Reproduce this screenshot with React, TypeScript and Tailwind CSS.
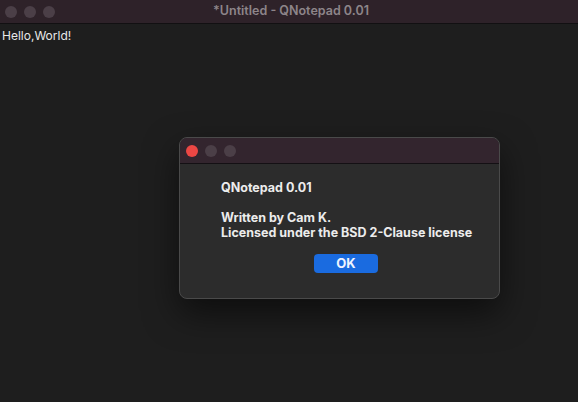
import React from 'react';

const Dot = ({ color }: { color: string }) => (
  <span className={`block w-[12px] h-[12px] rounded-full ${color}`} />
);

export default function App() {
  return (
    <div
      className="relative w-[578px] h-[402px] overflow-hidden bg-[#1e1e1e] text-white"
      style={{ fontFamily: 'Inter, "Liberation Sans", sans-serif' }}
    >
      {/* main window title bar */}
      <div className="relative flex items-center h-[24px] bg-[#2e2229] border-b border-[#121012]">
        <div className="flex gap-[7px] pl-[5px]">
          <Dot color="bg-[#4b3f47]" />
          <Dot color="bg-[#4b3f47]" />
          <Dot color="bg-[#4b3f47]" />
        </div>
        <div className="absolute inset-0 flex items-center justify-center pl-[4px] text-[12.5px] font-semibold text-[#8d8589]">
          *Untitled - QNotepad 0.01
        </div>
      </div>

      {/* editor */}
      <div className="px-[2px] pt-[4px] text-[12px] leading-[15px] text-[#e8e8e8]">Hello,World!</div>

      {/* about dialog */}
      <div className="absolute left-[179px] top-[137px] w-[321px] h-[162px] rounded-[8px] overflow-hidden border border-[#4a4a4a] bg-[#2c2c2c] shadow-[0_14px_34px_rgba(0,0,0,0.55)]">
        <div className="flex items-center h-[26px] bg-[#33252e] border-b border-[#141014]">
          <div className="flex gap-[7px] pl-[6px]">
            <Dot color="bg-[#ec4744]" />
            <Dot color="bg-[#4b3f47]" />
            <Dot color="bg-[#4b3f47]" />
          </div>
        </div>
        <div className="pl-[41px] pt-[16px] text-[12.5px] font-bold leading-[15px] text-[#ececec]">
          <div>QNotepad 0.01</div>
          <div className="mt-[15px]">Written by Cam K.</div>
          <div>Licensed under the BSD 2-Clause license</div>
        </div>
        <div className="flex justify-center mt-[14px]">
          <button className="w-[64px] h-[19px] ml-[13px] rounded-[4px] bg-[#1a6be0] text-[13px] font-bold leading-[19px] text-[#eef4ff]">
            OK
          </button>
        </div>
      </div>
    </div>
  );
}
